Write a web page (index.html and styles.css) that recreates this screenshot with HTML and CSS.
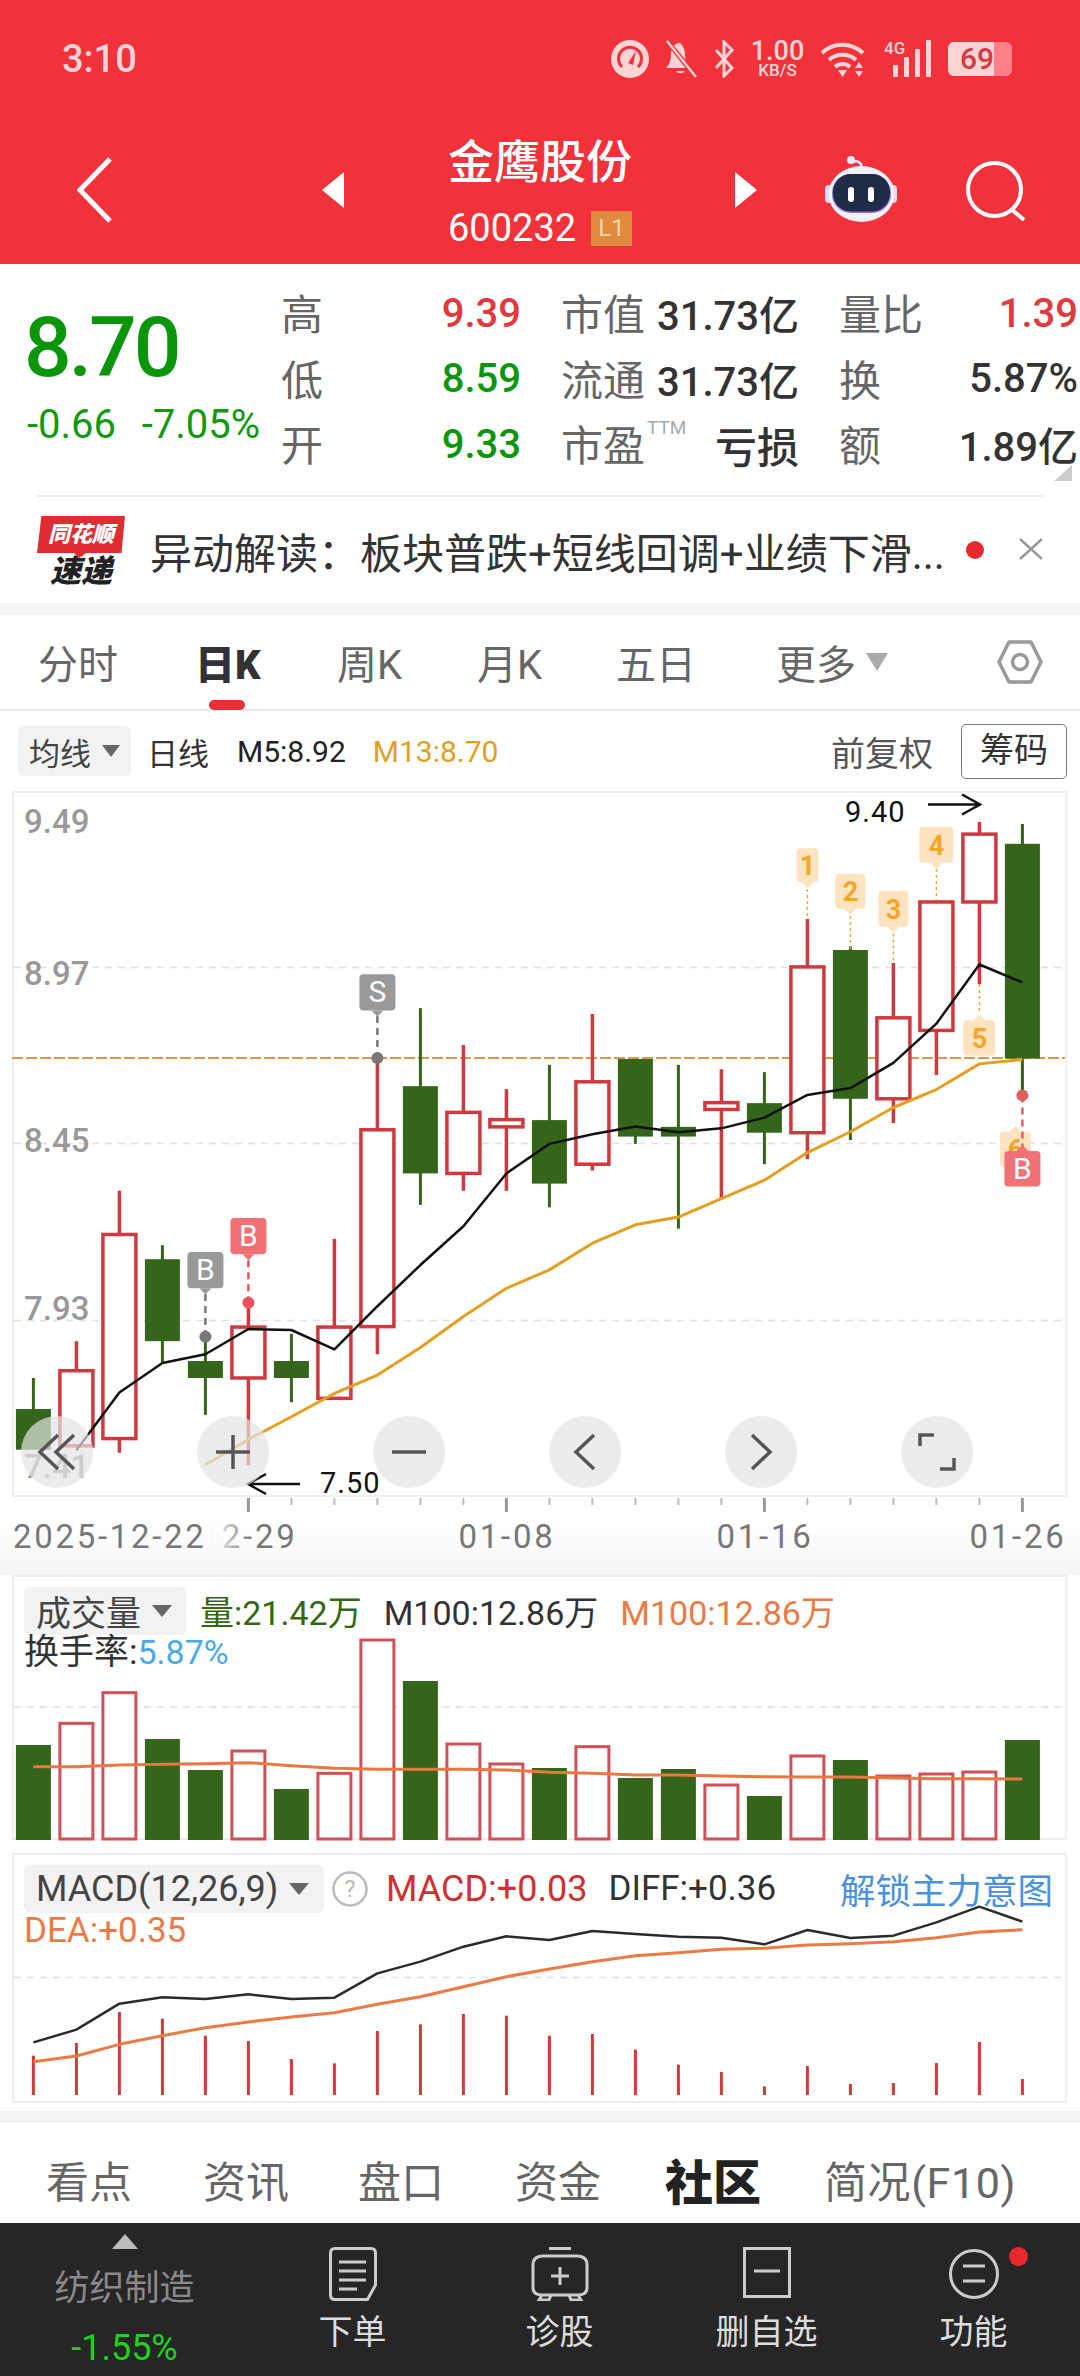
FILE: index.html
```html
<!DOCTYPE html>
<html lang="zh-CN">
<head>
    <meta charset="UTF-8">
    <meta name="viewport" content="width=device-width, initial-scale=1.0">
    <title>金鹰股份 600232</title>
    <link rel="stylesheet" href="styles.css">
</head>
<body>
    <header class="header">
        <div class="status-bar">
            <span class="clock">3:10</span>
            <div class="status-icons">
                <svg class="ic-gauge" width="38" height="38" viewBox="0 0 38 38"><circle cx="19" cy="19" r="19" fill="#fbd5d6"/><path d="M11 27a11.5 11.5 0 1 1 16 0" fill="none" stroke="#f1323b" stroke-width="3"/><path d="M17 23l8-12-3 14z" fill="#f1323b"/></svg>
                <svg class="ic-bell" width="32" height="38" viewBox="0 0 32 38"><path d="M15 3c-6 0-9 5-9 11 0 6-1 10-5 14h24c-4-4-5-8-5-14 0-6-4-11-5-11z" fill="#fbd5d6"/><path d="M11 31a5 4 0 0 0 9 0z" fill="#fbd5d6"/><path d="M2 1l29 36" stroke="#f1323b" stroke-width="5"/><path d="M2 1l29 36" stroke="#fbd5d6" stroke-width="2.4"/></svg>
                <svg class="ic-bt" width="22" height="38" viewBox="0 0 22 38"><path d="M3 10l16 18-8 8V2l8 8L3 28" fill="none" stroke="#fbd5d6" stroke-width="3"/></svg>
                <div class="net-speed"><span class="net-num">1.00</span><span class="net-unit">KB/S</span></div>
                <svg class="ic-wifi" width="49" height="38" viewBox="0 0 49 38"><g fill="none" stroke="#fbd5d6" stroke-width="4"><path d="M2 13c11-11 29-11 41 0"/><path d="M9 20c7-7 20-7 27 0"/><path d="M15 27c4-4 11-4 15 0"/></g><path d="M18 30h9l-4.500 7z" fill="#fbd5d6"/><path d="M39 22l4 6h-8zM39 37l-4-6h8z" fill="#fbd5d6"/></svg>
                <div class="cell">
                    <span class="cell-4g">4G</span>
                    <span class="cell-bar cell-bar-1"></span>
                    <span class="cell-bar cell-bar-2"></span>
                    <span class="cell-bar cell-bar-3"></span>
                    <span class="cell-bar cell-bar-4"></span>
                </div>
                <div class="battery"><span class="battery-level">69</span></div>
            </div>
        </div>
        <nav class="nav-bar">
            <svg class="nav-back" width="35" height="66" viewBox="0 0 35 66"><path d="M33 2L3 33l30 31" fill="none" stroke="#fff" stroke-width="5"/></svg>
            <span class="tri-left"></span>
            <div class="stock-name">
                <div class="stock-title">金鹰股份</div>
                <div class="stock-code">600232 <span class="badge-l1">L1</span></div>
            </div>
            <span class="tri-right"></span>
            <svg class="nav-robot" width="72" height="66" viewBox="0 0 72 66">
                <path d="M28 6c4-2 8 0 9 5" fill="none" stroke="#ece9fa" stroke-width="2.500"/>
                <circle cx="26" cy="4" r="4" fill="#ece9fa"/>
                <rect x="0" y="29" width="8" height="18" rx="4" fill="#dcd9f4"/>
                <rect x="64" y="29" width="8" height="18" rx="4" fill="#dcd9f4"/>
                <ellipse cx="36.500" cy="38" rx="33" ry="28" fill="#f1f0fb"/>
                <rect x="7" y="18" width="59" height="39" rx="19" fill="#8d6fe0"/>
                <rect x="8" y="18" width="57" height="37.500" rx="18" fill="#1f2b47"/>
                <rect x="23" y="31" width="6" height="15" rx="3" fill="#fff"/>
                <rect x="43" y="31" width="6" height="15" rx="3" fill="#fff"/>
            </svg>
            <svg class="nav-search" width="60" height="60" viewBox="0 0 60 60"><circle cx="28.500" cy="28.500" r="26.500" fill="none" stroke="#fff" stroke-width="4"/><path d="M45 48l13 11" stroke="#fff" stroke-width="4"/></svg>
        </nav>
    </header>

    <section class="quote">
        <div class="price-box">
            <div class="price">8.70</div>
            <div class="price-change"><span>-0.66</span><span>-7.05%</span></div>
        </div>
        <div class="stats">
            <div class="stat"><span class="stat-label">高</span><span class="up">9.39</span></div>
            <div class="stat"><span class="stat-label">市值</span><span>31.73亿</span></div>
            <div class="stat"><span class="stat-label">量比</span><span class="up">1.39</span></div>
            <div class="stat"><span class="stat-label">低</span><span class="down">8.59</span></div>
            <div class="stat"><span class="stat-label">流通</span><span>31.73亿</span></div>
            <div class="stat"><span class="stat-label">换</span><span>5.87%</span></div>
            <div class="stat"><span class="stat-label">开</span><span class="down">9.33</span></div>
            <div class="stat"><span class="stat-label">市盈<sup class="ttm">TTM</sup></span><span class="loss">亏损</span></div>
            <div class="stat"><span class="stat-label">额</span><span>1.89亿</span></div>
        </div>
        <span class="corner"></span>
    </section>

    <section class="news">
        <div class="news-logo">
            <div class="news-tag">同花顺</div>
            <div class="news-sub">速递</div>
        </div>
        <div class="news-text">异动解读：板块普跌+短线回调+业绩下滑...</div>
        <span class="news-dot"></span>
        <svg class="news-close" width="24" height="22" viewBox="0 0 24 22"><path d="M1 1l22 20M23 1L1 21" stroke="#999" stroke-width="2.500"/></svg>
    </section>

    <div class="gap"></div>

    <div class="period-tabs">
        <span>分时</span>
        <span class="period-active">日K</span>
        <span>周K</span>
        <span>月K</span>
        <span>五日</span>
        <span class="period-more">更多<i class="tri-down"></i></span>
        <svg class="period-gear" width="46" height="46" viewBox="0 0 46 46"><path d="M12 3h22l10 20-10 20H12L2 23z" fill="none" stroke="#999" stroke-width="3.500" stroke-linejoin="round"/><circle cx="23" cy="23" r="7.500" fill="none" stroke="#999" stroke-width="3.500"/></svg>
    </div>

    <div class="chart-bar">
        <div class="pill pill-ma">均线<i class="tri-down tri-small"></i></div>
        <span class="ma-name">日线</span>
        <span class="ma-5">M5:8.92</span>
        <span class="ma-13">M13:8.70</span>
        <span class="adjust">前复权</span>
        <span class="chip-btn">筹码</span>
    </div>

    <div class="panel panel-kline">
        <svg id="kline" class="panel-svg" viewBox="14 793 1051 702">
            <g class="grid">
                <line x1="14" x2="1065" y1="967.500" y2="967.500"/>
                <line x1="14" x2="1065" y1="1143.500" y2="1143.500"/>
                <line x1="14" x2="1065" y1="1320.500" y2="1320.500"/>
            </g>
            <line class="prev-close" x1="12" x2="1065" y1="1058" y2="1058"/>
            <g class="price-labels">
                <text x="24" y="833">9.49</text>
                <text x="24" y="985">8.97</text>
                <text x="24" y="1152">8.45</text>
                <text x="24" y="1320">7.93</text>
                <text x="24" y="1478">7.41</text>
            </g>
            <g class="extreme">
                <text x="845" y="822">9.40</text>
                <path d="M928 804.500h51m-17-10l18 10-18 10"/>
                <text x="320" y="1493">7.50</text>
                <path d="M300 1484h-51m17-10l-18 10 18 10"/>
            </g>
        </svg>
        <div class="kline-tools">
            <span class="tool"><svg width="40" height="40" viewBox="0 0 40 40"><path d="M21 3L3 20l18 17M37 3L19 20l18 17"/></svg></span>
            <span class="tool"><svg width="40" height="40" viewBox="0 0 40 40"><path d="M3 20h34M20 3v34"/></svg></span>
            <span class="tool"><svg width="40" height="40" viewBox="0 0 40 40"><path d="M3 20h34"/></svg></span>
            <span class="tool"><svg width="40" height="40" viewBox="0 0 40 40"><path d="M29 3L11 20l18 17"/></svg></span>
            <span class="tool"><svg width="40" height="40" viewBox="0 0 40 40"><path d="M11 3l18 17-18 17"/></svg></span>
            <span class="tool"><svg width="40" height="40" viewBox="0 0 40 40"><path d="M3 14V3h14M37 26v11H23"/></svg></span>
        </div>
    </div>

    <div class="date-axis">
        <svg id="axis" class="axis-svg" viewBox="0 1497 1080 78">
            <defs>
                <linearGradient id="dateFade" x1="0" x2="1" y1="0" y2="0">
                    <stop offset="0.1" stop-color="#777" stop-opacity="0"/>
                    <stop offset="0.55" stop-color="#777"/>
                </linearGradient>
            </defs>
            <g class="dates">
                <text class="date-faded" x="249" y="1548" text-anchor="middle">12-29</text>
                <text x="13" y="1548">2025-12-22</text>
                <text x="507" y="1548" text-anchor="middle">01-08</text>
                <text x="765" y="1548" text-anchor="middle">01-16</text>
                <text x="1018" y="1548" text-anchor="middle">01-26</text>
            </g>
        </svg>
    </div>

    <div class="panel panel-volume">
        <svg id="volume" class="panel-svg" viewBox="14 1577 1051 261">
            <line class="grid-line" x1="14" x2="1065" y1="1707" y2="1707"/>
        </svg>
        <div class="legend">
            <div class="pill pill-volume">成交量<i class="tri-down"></i></div>
            <span class="vol-now">量:21.42万</span>
            <span class="legend-plain">M100:12.86万</span>
            <span class="legend-orange">M100:12.86万</span>
        </div>
        <div class="legend-line">换手率:<span class="turnover">5.87%</span></div>
    </div>

    <div class="panel panel-macd">
        <svg id="macd" class="panel-svg" viewBox="14 1855 1051 246">
            <line class="grid-line" x1="14" x2="1065" y1="1977.500" y2="1977.500"/>
        </svg>
        <div class="legend legend-macd">
            <div class="pill pill-macd">MACD(12,26,9)<i class="tri-down"></i></div>
            <svg class="help" width="36" height="36" viewBox="0 0 36 36"><circle cx="18" cy="18" r="16.500" fill="none" stroke="#bbb" stroke-width="2.500"/><text x="18" y="26" text-anchor="middle">?</text></svg>
            <span class="macd-val">MACD:+0.03</span>
            <span class="legend-plain">DIFF:+0.36</span>
            <span class="unlock">解锁主力意图</span>
        </div>
        <div class="legend-line legend-orange">DEA:+0.35</div>
    </div>

    <div class="gap gap-bottom"></div>

    <div class="info-tabs">
        <span>看点</span>
        <span>资讯</span>
        <span>盘口</span>
        <span>资金</span>
        <span class="info-active">社区</span>
        <span>简况(F10)</span>
    </div>

    <footer class="footer">
        <div class="foot-sector">
            <span class="tri-up"></span>
            <span class="sector-name">纺织制造</span>
            <span class="sector-pct">-1.55%</span>
        </div>
        <div class="foot-item">
            <svg width="48" height="54" viewBox="0 0 48 54"><path d="M6 1.500h36q4.500 0 4.500 4.500v32l-8 14.500H6q-4.500 0-4.500-4.500V6Q1.500 1.500 6 1.500zM10 15h27M10 24h27M10 33h27M10 42h18"/></svg>
            <span>下单</span>
        </div>
        <div class="foot-item">
            <svg width="58" height="54" viewBox="0 0 58 54"><path d="M18 1.500h22M12 9h34q10 0 10 9v23q0 7-10 7H12q-10 0-10-7V18q0-9 10-9zM29 20v18M20 29h18M11 48l-3 5h10l2-5M47 48l3 5H40l-2-5"/></svg>
            <span>诊股</span>
        </div>
        <div class="foot-item">
            <svg width="48" height="54" viewBox="0 0 48 54"><path d="M1.500 1.500h45v48h-45zM11 24h26"/></svg>
            <span>删自选</span>
        </div>
        <div class="foot-item foot-more">
            <svg width="50" height="54" viewBox="0 0 50 54"><circle cx="25" cy="27" r="23.500"/><path d="M14 19h22M14 34h22"/></svg>
            <span>功能</span>
            <i class="foot-dot"></i>
        </div>
    </footer>

    <script src="chart.js"></script>
</body>
</html>
```

FILE: styles.css
```css
* {
    box-sizing: border-box;
}
body {
    font-family: Roboto, "Noto Sans CJK SC", sans-serif;
    background-color: #fff;
    color: #333;
    margin: 0;
    width: 1080px;
    height: 2376px;
    overflow: hidden;
}
i {
    font-style: normal;
}

/* header */
.header {
    background-color: #f1323b;
    height: 264px;
    color: #fff;
}
.status-bar {
    height: 90px;
    padding: 40px 68px 0 62px;
    display: flex;
    justify-content: space-between;
    align-items: flex-start;
    color: #fbd5d6;
}
.clock {
    font-size: 38px;
    font-weight: 500;
    line-height: 38px;
}
.status-icons {
    display: flex;
    align-items: flex-start;
}
.ic-bell {
    margin-left: 16px;
}
.ic-bt {
    margin-left: 16px;
}
.net-speed {
    margin-left: 16px;
    width: 53px;
    display: flex;
    flex-direction: column;
    align-items: center;
    font-weight: 500;
}
.net-num {
    font-size: 27px;
    line-height: 22px;
}
.net-unit {
    font-size: 17px;
    line-height: 16px;
}
.ic-wifi {
    margin-left: 16px;
}
.cell {
    margin-left: 15px;
    width: 47px;
    height: 37px;
    position: relative;
}
.cell-4g {
    position: absolute;
    left: 0;
    top: -2px;
    font-size: 17px;
    font-weight: 500;
}
.cell-bar {
    position: absolute;
    bottom: 0;
    width: 5px;
    background-color: #fbd5d6;
}
.cell-bar-1 { left: 9px; height: 12px; }
.cell-bar-2 { left: 20px; height: 20px; }
.cell-bar-3 { left: 31px; height: 28px; }
.cell-bar-4 { left: 42px; height: 37px; }
.battery {
    margin-left: 17px;
    margin-top: 2px;
    width: 64px;
    height: 34px;
    border-radius: 6px;
    background-color: #fb8088;
}
.battery-level {
    display: block;
    width: 46px;
    height: 34px;
    border-radius: 6px 0 0 6px;
    background-color: #fbd5d6;
    color: #d63a42;
    font-size: 30px;
    font-weight: 500;
    line-height: 34px;
    text-align: right;
}
.nav-bar {
    height: 148px;
    margin-top: 26px;
    padding-left: 77px;
    display: flex;
    align-items: center;
}
.tri-left {
    margin-left: 210px;
    width: 0;
    height: 0;
    border-style: solid;
    border-width: 18px 22px 18px 0;
    border-color: transparent #fff transparent transparent;
}
.tri-right {
    margin-left: 103px;
    width: 0;
    height: 0;
    border-style: solid;
    border-width: 18px 0 18px 22px;
    border-color: transparent transparent transparent #fff;
}
.stock-name {
    margin-left: 104px;
    width: 184px;
    margin-top: 8px;
}
.stock-title {
    font-size: 46px;
    font-weight: 500;
    line-height: 54px;
    white-space: nowrap;
}
.stock-code {
    font-size: 38px;
    line-height: 50px;
    margin-top: 14px;
    display: flex;
    align-items: center;
    justify-content: space-between;
}
.badge-l1 {
    display: inline-block;
    width: 41px;
    height: 35px;
    background-color: #e08a3e;
    color: #fbd6a8;
    font-size: 24px;
    line-height: 35px;
    text-align: center;
}
.nav-robot {
    margin-left: 68px;
    margin-top: -2px;
}
.nav-search {
    margin-left: 69px;
    margin-top: 1px;
}

/* quote */
.quote {
    position: relative;
    height: 231px;
    display: flex;
}
.price-box {
    width: 281px;
    padding: 42px 0 0 24px;
}
.price {
    font-size: 84px;
    font-weight: 500;
    letter-spacing: -3px;
    line-height: 84px;
    color: #0a960a;
}
.price-change {
    margin-top: 15px;
    padding-left: 3px;
    width: 236px;
    display: flex;
    justify-content: space-between;
    font-size: 40px;
    line-height: 40px;
    color: #0f990f;
}
.stats {
    width: 797px;
    padding-top: 16px;
    display: grid;
    grid-template-columns: 240px 238px 239px;
    grid-auto-rows: 65.5px;
    column-gap: 40px;
}
.stat {
    display: flex;
    justify-content: space-between;
    align-items: center;
    padding-top: 1px;
    font-size: 40px;
    white-space: nowrap;
}
.stat span:last-child {
    font-weight: 500;
}
.stat .stat-label {
    margin-top: -3px;
    font-size: 42px;
    font-weight: 400;
    color: #666;
    position: relative;
}
.ttm {
    position: absolute;
    left: 86px;
    top: 4px;
    font-size: 19px;
    line-height: 24px;
    color: #aaa;
}
.up {
    color: #e03a3e;
}
.down {
    color: #0a960a;
}
.stat .loss {
    font-weight: 700;
    font-size: 42px;
}
.corner {
    position: absolute;
    right: 8px;
    top: 201px;
    width: 18px;
    height: 16px;
    background-color: #ccc;
    clip-path: polygon(100% 0, 100% 100%, 0 100%);
}

/* news */
.news {
    margin: 0 37px 0 36px;
    height: 108px;
    border-top: 2px solid #eee;
    display: flex;
    align-items: center;
    position: relative;
}
.news-logo {
    width: 88px;
    margin-left: 1px;
    margin-top: 2px;
}
.news-tag {
    height: 42px;
    background-color: #e02c33;
    color: #fff;
    font-size: 22px;
    font-weight: 900;
    font-style: italic;
    line-height: 37px;
    text-align: center;
    clip-path: polygon(5% 0, 100% 0, 96% 88%, 56% 88%, 48% 100%, 42% 88%, 0 88%);
}
.news-sub {
    font-size: 31px;
    font-weight: 900;
    font-style: italic;
    line-height: 28px;
    color: #222;
    text-align: center;
}
.news-text {
    margin-left: 25px;
    width: 800px;
    font-size: 42px;
    color: #333;
    white-space: nowrap;
}
.news-dot {
    position: absolute;
    left: 930px;
    top: 44px;
    width: 18px;
    height: 18px;
    border-radius: 50%;
    background-color: #e8282f;
}
.news-close {
    position: absolute;
    right: 0;
    top: 41px;
}
.gap {
    height: 12px;
    background-color: #f5f5f5;
}

/* period tabs */
.period-tabs {
    position: relative;
    height: 96px;
    padding: 0 37px 0 38px;
    border-bottom: 2px solid #e8e8e8;
    display: grid;
    grid-template-columns: 160px 139px 140px 139px 160px 150px 1fr;
    align-items: center;
    font-size: 40px;
    color: #666;
}
.period-active {
    margin-left: -3px;
    font-weight: 900;
    color: #333;
    position: relative;
}
.period-active::after {
    content: "";
    position: absolute;
    left: 14px;
    top: 67px;
    width: 36px;
    height: 10px;
    border-radius: 5px;
    background-color: #e5303a;
}
.period-more {
    display: flex;
    align-items: center;
}
.tri-down {
    display: inline-block;
    margin-left: 10px;
    width: 0;
    height: 0;
    border-style: solid;
    border-width: 18px 11px 0 11px;
    border-color: #aaa transparent transparent transparent;
}
.tri-small {
    margin-left: 11px;
    border-width: 12px 9px 0 9px;
    border-color: #666 transparent transparent transparent;
}
.period-gear {
    justify-self: end;
}

/* chart toolbar */
.chart-bar {
    height: 80px;
    padding: 0 13px 0 18px;
    display: flex;
    align-items: center;
}
.pill {
    background-color: #f2f2f2;
    border-radius: 6px;
    display: flex;
    align-items: center;
    color: #444;
}
.pill-ma {
    width: 113px;
    height: 50px;
    padding-left: 11px;
    font-size: 31px;
}
.ma-name {
    margin-left: 16px;
    font-size: 31px;
    color: #333;
}
.ma-5 {
    margin-left: 28px;
    font-size: 30px;
    color: #222;
}
.ma-13 {
    margin-left: 27px;
    font-size: 30px;
    color: #e2a01e;
}
.adjust {
    margin-left: auto;
    font-size: 34px;
    color: #555;
}
.chip-btn {
    margin-left: 28px;
    width: 106px;
    height: 55px;
    border: 1.5px solid #777;
    border-radius: 5px;
    font-size: 34px;
    line-height: 50px;
    text-align: center;
    color: #333;
}

/* chart panels */
.panel {
    position: relative;
    margin: 0 13px 0 12px;
    border: 2px solid #eee;
}
.panel-kline {
    height: 706px;
}
.panel-volume {
    height: 265px;
    padding: 9px 0 0 10px;
}
.panel-macd {
    height: 250px;
    margin-top: 13px;
    padding: 8px 12px 0 10px;
}
.panel-svg {
    position: absolute;
    left: 0;
    top: 0;
    width: 100%;
    height: 100%;
    overflow: visible;
}
.grid line, .grid-line {
    stroke: #e0e0e0;
    stroke-width: 1.500;
    stroke-dasharray: 7 6;
}
.prev-close {
    stroke: #d9974f;
    stroke-width: 2;
    stroke-dasharray: 11 3;
}
.price-labels text {
    font-size: 33px;
    font-weight: 500;
    fill: #999;
}
.extreme text {
    font-size: 29px;
    letter-spacing: 1px;
    fill: #111;
}
.extreme path {
    fill: none;
    stroke: #111;
    stroke-width: 2.500;
}
.badge-text {
    font-size: 30px;
    text-anchor: middle;
    fill: #fff;
}
.badge-num {
    font-size: 27px;
    font-weight: 700;
    text-anchor: middle;
    fill: #f5a52a;
}
.kline-tools {
    position: absolute;
    left: 7px;
    top: 623px;
    display: flex;
    gap: 104px;
}
.tool {
    width: 72px;
    height: 72px;
    border-radius: 50%;
    background-color: rgba(228, 228, 228, 0.7);
    display: flex;
    align-items: center;
    justify-content: center;
}
.tool path {
    fill: none;
    stroke: #555;
    stroke-width: 3.500;
}
.date-axis {
    height: 78px;
    background: linear-gradient(#fff 30%, #f6f6f6);
}
.axis-svg {
    display: block;
    width: 1080px;
    height: 78px;
}
.dates text {
    font-size: 33px;
    letter-spacing: 2.700px;
    fill: #777;
}
.dates .date-faded {
    fill: url(#dateFade);
}
.legend {
    position: relative;
    display: flex;
    align-items: center;
    font-size: 34px;
    white-space: nowrap;
}
.pill-volume {
    width: 162px;
    height: 48px;
    padding-left: 12px;
    font-size: 35px;
}
.pill-volume .tri-down, .pill-macd .tri-down {
    margin-left: 11px;
    border-width: 12px 10px 0 10px;
    border-color: #666 transparent transparent transparent;
}
.vol-now {
    margin-left: 14px;
    color: #346614;
}
.legend-plain {
    margin-left: 22px;
    color: #333;
}
.legend-orange {
    color: #ec7a45;
}
.legend .legend-orange {
    margin-left: 22px;
}
.legend-line {
    position: relative;
    font-size: 35px;
    line-height: 34px;
}
.turnover {
    color: #4aaae8;
    font-size: 34px;
}
.pill-macd {
    width: 300px;
    height: 48px;
    padding-left: 12px;
    font-size: 36px;
}
.help {
    margin-left: 8px;
}
.help text {
    font-size: 24px;
    fill: #bbb;
}
.macd-val {
    margin-left: 18px;
    font-size: 36px;
    color: #d03030;
}
.legend-macd .legend-plain {
    font-size: 35px;
    margin-left: 21px;
}
.unlock {
    margin-left: auto;
    font-size: 35.500px;
    color: #4a90e0;
}

/* bottom */
.gap-bottom {
    margin-top: 8px;
}
.info-tabs {
    height: 100px;
    padding: 12px 0 0 46px;
    display: grid;
    grid-template-columns: 157px 155px 157px 150px 159px 1fr;
    align-items: center;
    font-size: 43px;
    color: #666;
}
.info-tabs span:last-child {
    letter-spacing: .6px;
}
.info-tabs .info-active {
    font-size: 48px;
    font-weight: 900;
    color: #222;
}
.footer {
    height: 153px;
    background-color: #262626;
    display: grid;
    grid-template-columns: 249px repeat(4, 207px);
}
.foot-sector {
    display: flex;
    flex-direction: column;
    align-items: center;
    padding-top: 11px;
}
.tri-up {
    width: 0;
    height: 0;
    border-style: solid;
    border-width: 0 13px 15px 13px;
    border-color: transparent transparent #bbb transparent;
}
.sector-name {
    margin-top: 15px;
    font-size: 35px;
    line-height: 50px;
    color: #8a8a8a;
}
.sector-pct {
    margin-top: 9px;
    font-size: 36px;
    line-height: 50px;
    color: #22d022;
}
.foot-item {
    position: relative;
    padding-top: 24px;
    display: flex;
    flex-direction: column;
    align-items: center;
    font-size: 34px;
    color: #ddd;
}
.foot-item span {
    margin-top: 11px;
    line-height: 40px;
}
.foot-item path, .foot-item circle {
    fill: none;
    stroke: #ccc;
    stroke-width: 3;
}
.foot-dot {
    position: absolute;
    left: 139px;
    top: 24px;
    width: 19px;
    height: 19px;
    border-radius: 50%;
    background-color: #e8282f;
}
```

FILE: chart.js
```js
const NS = 'http://www.w3.org/2000/svg';
const RED = '#cf3a40';
const GREEN = '#34651a';

const xAt = i => 33.4 + 43 * i;
// the series below were measured off the picture, so each panel has its own scale
const kY = v => 790 + v / 2.063;
const volY = v => 1560 + v / 3;
const macdY = v => 1840 + v / 3;

function add(parent, tag, attrs, text) {
    const el = document.createElementNS(NS, tag);
    Object.keys(attrs).forEach(k => el.setAttribute(k, attrs[k]));
    if (text) el.textContent = text;
    parent.appendChild(el);
    return el;
}

function line(parent, points, color, width) {
    add(parent, 'polyline', {
        points: points.map(p => p.join(',')).join(' '),
        fill: 'none',
        stroke: color,
        'stroke-width': width,
        'stroke-linejoin': 'round'
    });
}

// [rising, high, body top, body bottom, low]
const candles = [
    [0, 1213, 1277, 1361, 1361], [1, 1137, 1198, 1353, 1353], [1, 827, 917, 1338, 1367],
    [0, 939, 968, 1137, 1182], [0, 1128, 1178, 1213, 1289], [1, 1058, 1108, 1213, 1393],
    [0, 1122, 1178, 1213, 1263], [1, 926, 1108, 1255, 1255], [1, 555, 701, 1107, 1164],
    [0, 450, 611, 791, 856], [1, 526, 665, 791, 827], [1, 617, 680, 695, 827],
    [0, 567, 681, 812, 861], [1, 462, 602, 772, 785], [0, 555, 555, 715, 730],
    [0, 567, 695, 715, 905], [1, 576, 645, 659, 842], [0, 582, 646, 707, 772],
    [1, 266, 365, 707, 762], [0, 322, 330, 637, 722], [1, 357, 470, 637, 687],
    [1, 228, 231, 496, 588], [1, 66, 91, 231, 400], [0, 70, 111, 554, 630]
];
const ma5 = [1362, 1243, 1182, 1164, 1112, 1114, 1154, 1065, 980, 900, 791, 730, 710, 694, 706, 698, 676, 629, 615, 563, 482, 360, 397];
const ma13 = [1392, 1340, 1293, 1245, 1207, 1150, 1086, 1028, 990, 935, 897, 881, 843, 805, 748, 705, 655, 618, 565, 556];

const volumes = [555, 490, 398, 537, 630, 573, 687, 640, 240, 363, 552, 612, 624, 560, 654, 627, 675, 708, 588, 600, 648, 642, 636, 540];
const volMa = [620, 620, 615, 613, 611, 608, 617, 625, 628, 628, 628, 630, 637, 640, 645, 645, 648, 650, 651, 651, 654, 656, 656, 657];

const macdBars = [647, 609, 516, 536, 587, 603, 657, 670, 573, 553, 522, 527, 587, 582, 629, 674, 696, 739, 678, 732, 729, 669, 606, 717];
const diff = [607, 569, 491, 472, 477, 463, 477, 473, 400, 365, 320, 289, 300, 273, 282, 290, 293, 313, 270, 294, 287, 247, 200, 245];
const dea = [665, 648, 613, 587, 563, 546, 531, 518, 493, 470, 440, 410, 387, 365, 347, 338, 328, 325, 315, 311, 305, 293, 276, 269];

const kline = document.getElementById('kline');

candles.forEach((c, i) => {
    const x = xAt(i);
    const color = c[0] ? RED : GREEN;
    add(kline, 'line', { x1: x, x2: x, y1: kY(c[1]), y2: kY(c[4]), stroke: color, 'stroke-width': c[0] ? 3.5 : 3 });
    if (c[0]) {
        add(kline, 'rect', { x: x - 16.5, y: kY(c[2]), width: 33, height: kY(c[3]) - kY(c[2]), fill: '#fff', stroke: color, 'stroke-width': 3.5 });
    } else {
        add(kline, 'rect', { x: x - 17.5, y: kY(c[2]), width: 35, height: kY(c[3]) - kY(c[2]), fill: color });
    }
});

line(kline, ma5.map((v, i) => [xAt(i + 1), kY(v)]), '#111', 2.5);
line(kline, ma13.map((v, i) => [xAt(i + 4), kY(v)]), '#e3a020', 3);

// buy/sell flags and the numbered signals
function flag(f) {
    const x = xAt(f.i) + (f.dx || 0);
    const tipDir = f.below ? -1 : 1;
    const tipBase = f.below ? f.top : f.bottom;
    const dash = f.num ? '3 3' : '7 5';
    if (f.dash) {
        add(kline, 'line', { x1: xAt(f.i), x2: xAt(f.i), y1: kY(f.dash[0]), y2: kY(f.dash[1]), stroke: f.line, 'stroke-width': f.num ? 1.5 : 2.5, 'stroke-dasharray': dash });
    }
    if (f.dot) {
        add(kline, 'circle', { cx: xAt(f.i), cy: kY(f.dot), r: 6, fill: f.line });
    }
    add(kline, 'rect', { x: x - f.w / 2, y: kY(f.top), width: f.w, height: kY(f.bottom) - kY(f.top), rx: 4, fill: f.fill });
    const base = kY(tipBase);
    add(kline, 'polygon', { points: `${x - 6},${base} ${x + 6},${base} ${x},${base + tipDir * 6}`, fill: f.fill });
    add(kline, 'text', { x: x, y: (kY(f.top) + kY(f.bottom)) / 2 + 10, class: f.num ? 'badge-num' : 'badge-text' }, f.text);
}

const PEACH = '#fde3c0';
[
    { i: 18, w: 22, top: 120, bottom: 190, dash: [204, 266], text: '1', fill: PEACH, line: '#e8a83c', num: true },
    { i: 19, w: 30, top: 173, bottom: 245, dash: [260, 330], text: '2', fill: PEACH, line: '#e8a83c', num: true },
    { i: 20, w: 30, top: 208, bottom: 282, dash: [296, 357], text: '3', fill: PEACH, line: '#e8a83c', num: true },
    { i: 21, w: 34, top: 76, bottom: 150, dash: [163, 228], text: '4', fill: PEACH, line: '#e8a83c', num: true },
    { i: 22, w: 32, top: 475, bottom: 548, below: true, dash: [400, 462], text: '5', fill: PEACH, line: '#e8a83c', num: true },
    { i: 23, dx: -7, w: 31, top: 705, bottom: 778, below: true, text: '6', fill: PEACH, line: '#e8a83c', num: true },
    { i: 23, w: 36, top: 745, bottom: 818, below: true, dash: [630, 745], dot: 630, text: 'B', fill: '#f07277', line: '#e06060' },
    { i: 8, w: 36, top: 380, bottom: 455, dash: [466, 553], dot: 553, text: 'S', fill: '#999', line: '#777' },
    { i: 4, w: 36, top: 953, bottom: 1028, dash: [1040, 1128], dot: 1128, text: 'B', fill: '#999', line: '#777' },
    { i: 5, w: 36, top: 883, bottom: 958, dash: [970, 1058], dot: 1058, text: 'B', fill: '#f07277', line: '#f0525a' }
].forEach(flag);

// date ticks
const axis = document.getElementById('axis');
for (let i = 5; i < 24; i++) {
    const major = (i - 5) % 6 === 0;
    add(axis, 'line', { x1: xAt(i), x2: xAt(i), y1: 1498, y2: major ? 1512 : 1505, stroke: major ? '#999' : '#bbb', 'stroke-width': major ? 3 : 2 });
}

// volume
const volume = document.getElementById('volume');
volumes.forEach((v, i) => {
    const x = xAt(i);
    const y = volY(v);
    if (candles[i][0]) {
        add(volume, 'rect', { x: x - 16.5, y: y, width: 33, height: 1839 - y, fill: '#fff', stroke: '#cf5058', 'stroke-width': 3 });
    } else {
        add(volume, 'rect', { x: x - 17.5, y: y, width: 35, height: 1840 - y, fill: GREEN });
    }
});
line(volume, volMa.map((v, i) => [xAt(i), volY(v)]), '#e8783f', 3);

// macd
const macd = document.getElementById('macd');
macdBars.forEach((v, i) => {
    add(macd, 'line', { x1: xAt(i), x2: xAt(i), y1: macdY(v), y2: macdY(765), stroke: '#d03a3a', 'stroke-width': 3 });
});
line(macd, diff.map((v, i) => [xAt(i), macdY(v)]), '#2b2b2b', 2.5);
line(macd, dea.map((v, i) => [xAt(i), macdY(v)]), '#ec7a45', 3);
```
